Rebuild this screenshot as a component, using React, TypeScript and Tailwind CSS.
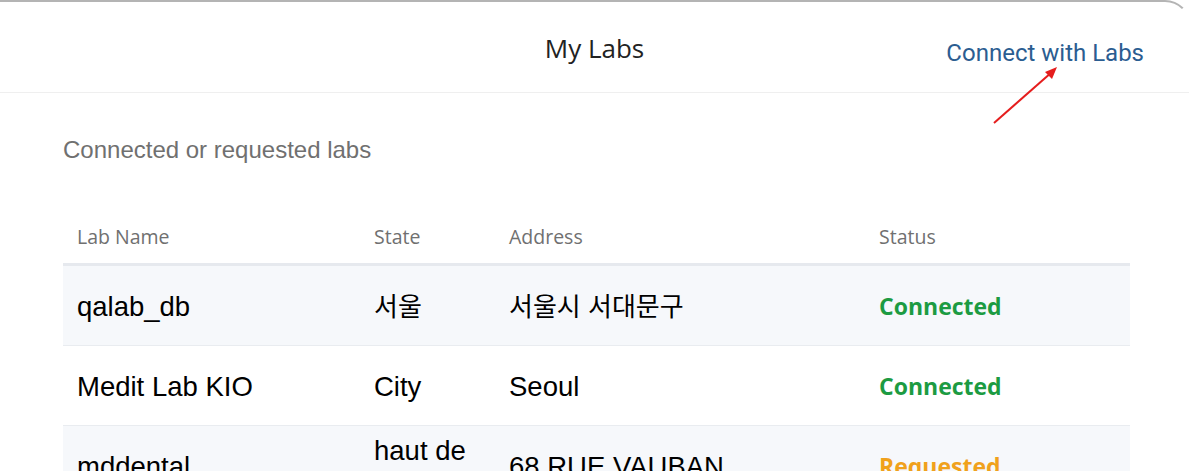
const labs = [
  { name: "qalab_db", state: "서울", address: "서울시 서대문구", status: "Connected" },
  { name: "Medit Lab KIO", state: "City", address: "Seoul", status: "Connected" },
  { name: "mddental", state: "haut de seine", address: "68 RUE VAUBAN", status: "Requested" },
];

const hasHangul = (s: string) => /[가-힣]/.test(s);

function Cell({ text }: { text: string }) {
  return (
    <div
      className={
        hasHangul(text)
          ? "px-[14px] text-[26px] leading-[32px] text-black"
          : "px-[14px] text-[27.5px] leading-[32px] text-black"
      }
    >
      {text}
    </div>
  );
}

export default function App() {
  return (
    <main
      className="relative h-[471px] w-full overflow-hidden bg-white"
      style={{ fontFamily: '"Liberation Sans", "Noto Sans CJK KR", sans-serif' }}
    >
      <div className="h-full rounded-tr-[26px] border-t-2 border-r-2 border-t-[#b4b4b4] border-r-transparent">
        <header className="grid h-[91px] grid-cols-[1fr_auto_1fr] border-b border-[#efefef]">
          <div />
          <h1 className="pt-[28px] font-['Open_Sans',sans-serif] text-[26px] leading-[36px] text-[#222]">
            My Labs
          </h1>
          <div className="flex justify-end pr-[45px] pt-[37px]">
            <a className="font-['Roboto',sans-serif] text-[24px] leading-[28px] text-[#2b5d91]">
              Connect with Labs
            </a>
          </div>
        </header>

        <section className="pl-[63px]">
          <p className="mt-[41px] text-[24px] leading-[32px] text-[#707070]">
            Connected or requested labs
          </p>

          <div className="mt-[44px] w-[1067px]">
            <div className="grid h-[56px] grid-cols-[297px_135px_370px_265px] items-center border-b-[3px] border-[#e6e9ee] pt-[1px] font-['Open_Sans',sans-serif] text-[19.5px] text-[#707070]">
              <div className="px-[14px]">Lab Name</div>
              <div className="px-[14px]">State</div>
              <div className="px-[14px]">Address</div>
              <div className="px-[14px]">Status</div>
            </div>
            {labs.map((lab, i) => (
              <div
                key={lab.name}
                className={
                  i % 2 === 0
                    ? "grid h-[80px] grid-cols-[297px_135px_370px_265px] items-center border-b border-[#e9ecf0] bg-[#f6f8fb] pt-[2px]"
                    : "grid h-[80px] grid-cols-[297px_135px_370px_265px] items-center border-b border-[#e9ecf0] bg-white pt-[2px]"
                }
              >
                <Cell text={lab.name} />
                <Cell text={lab.state} />
                <Cell text={lab.address} />
                <div
                  className={
                    lab.status === "Connected"
                      ? "px-[14px] font-['Open_Sans',sans-serif] text-[23px] font-bold text-[#1c9b42]"
                      : "px-[14px] font-['Open_Sans',sans-serif] text-[23px] font-bold text-[#f0a11c]"
                  }
                >
                  {lab.status}
                </div>
              </div>
            ))}
          </div>
        </section>
      </div>

      <svg className="absolute left-[990px] top-[62px]" width="72" height="66" viewBox="0 0 72 66">
        <line x1="4" y1="61" x2="62" y2="10" stroke="#e51d1d" strokeWidth="2" />
        <polygon points="67,5 55,10 62,17" fill="#e51d1d" />
      </svg>
    </main>
  );
}
